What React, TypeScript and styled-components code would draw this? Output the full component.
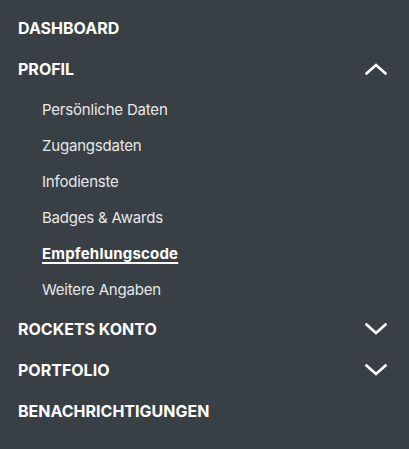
import React from "react";
import styled, { createGlobalStyle } from "styled-components";

const Global = createGlobalStyle`
  html, body { margin: 0; padding: 0; background: #394045; }
  body { font-family: "Inter", "Lato", sans-serif; }
`;

const Nav = styled.nav`
  width: 409px;
  height: 449px;
  background: #394045;
  padding: 7px 22px 0 18px;
  box-sizing: border-box;
  display: flex;
  flex-direction: column;
`;

const TopRow = styled.div`
  height: 41px;
  display: flex;
  align-items: center;
  justify-content: space-between;
`;

const TopLabel = styled.span`
  color: #ffffff;
  font-weight: 700;
  font-size: 16px;
  letter-spacing: 0px;
`;

const SubList = styled.ul`
  list-style: none;
  margin: 0;
  padding: 2px 0 1px 24px;
  display: flex;
  flex-direction: column;
`;

const SubItem = styled.li<{ $active?: boolean }>`
  height: 36px;
  display: flex;
  align-items: center;
  color: ${(p) => (p.$active ? "#ffffff" : "#e6e8e9")};
  font-size: 15px;
  font-weight: ${(p) => (p.$active ? 700 : 400)};
  letter-spacing: ${(p) => (p.$active ? "0.2px" : "-0.2px")};
  text-decoration: ${(p) => (p.$active ? "underline" : "none")};
  text-decoration-skip-ink: none;
  text-underline-offset: 3px;
  text-decoration-thickness: 1.5px;
`;

const Chevron = ({ up }: { up?: boolean }) => (
  <svg width="22" height="12" viewBox="0 0 22 12" fill="none">
    <polyline
      points={up ? "1.5,10.5 11,2 20.5,10.5" : "1.5,1.5 11,10 20.5,1.5"}
      stroke="#ffffff"
      strokeWidth="2.6"
      strokeLinecap="square"
      strokeLinejoin="miter"
    />
  </svg>
);

const subs = [
  "Persönliche Daten",
  "Zugangsdaten",
  "Infodienste",
  "Badges & Awards",
  "Empfehlungscode",
  "Weitere Angaben",
];

export default function App() {
  return (
    <>
      <Global />
      <Nav>
        <TopRow>
          <TopLabel>DASHBOARD</TopLabel>
        </TopRow>
        <TopRow>
          <TopLabel>PROFIL</TopLabel>
          <Chevron up />
        </TopRow>
        <SubList>
          {subs.map((s) => (
            <SubItem key={s} $active={s === "Empfehlungscode"}>
              {s}
            </SubItem>
          ))}
        </SubList>
        <TopRow>
          <TopLabel>ROCKETS KONTO</TopLabel>
          <Chevron />
        </TopRow>
        <TopRow>
          <TopLabel>PORTFOLIO</TopLabel>
          <Chevron />
        </TopRow>
        <TopRow>
          <TopLabel>BENACHRICHTIGUNGEN</TopLabel>
        </TopRow>
      </Nav>
    </>
  );
}
